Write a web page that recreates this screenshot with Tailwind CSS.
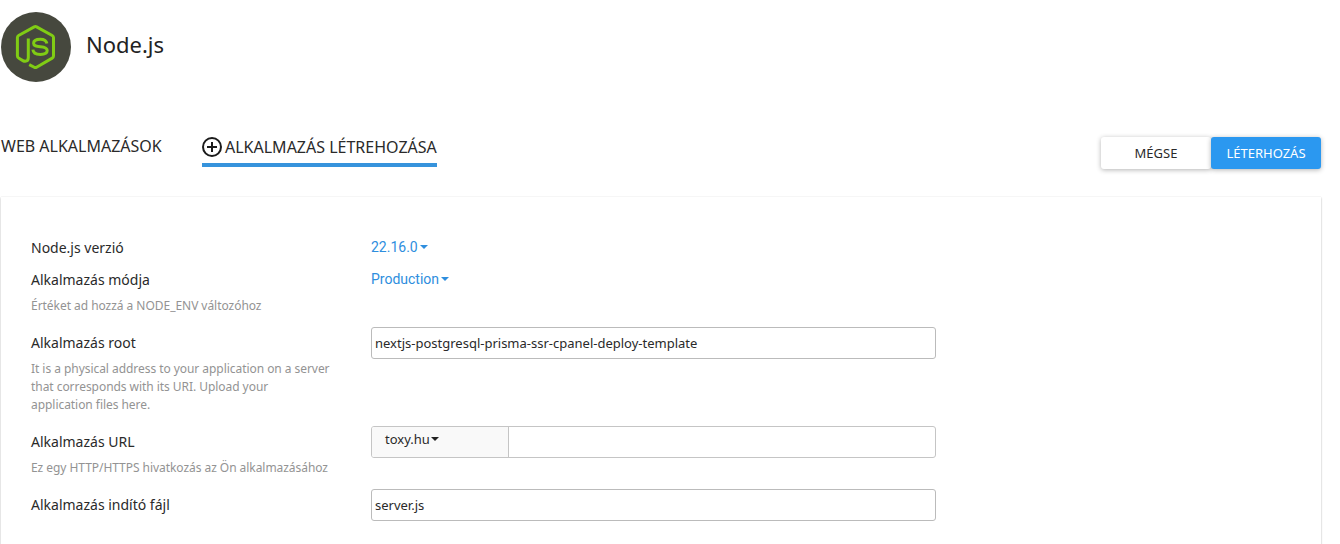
<!DOCTYPE html>
<html lang="hu">
<head>
<meta charset="utf-8">
<title>Node.js</title>
<script src="https://cdn.jsdelivr.net/npm/@tailwindcss/browser@4"></script>
</head>
<body class="h-[544px] overflow-hidden bg-white font-['Noto_Sans',sans-serif] text-[#2a2a2a]">
<header class="flex h-[82px] items-center pt-3 pl-px">
  <svg class="size-[70px] shrink-0" viewBox="1 12 70 70" fill="none" stroke="#80cc14" stroke-width="3">
    <circle cx="36" cy="47" r="35" fill="#46483e" stroke="none"/>
    <path d="M28.300 38.500V57.600Q28.300 61.300 25.200 61.300Q24 61.300 22.800 60.600L18.900 58.300Q17.400 57.400 17.400 56V37.500Q17.400 36.200 18.600 35.500L34.200 26.900Q35.400 26.300 36.600 26.900L52.200 35.500Q53.500 36.200 53.500 37.500V56Q53.500 57.400 52.200 58.100L36.600 67.200Q35.400 67.900 34.200 67.200L29.200 64.600"/>
    <path d="M46.900 43.600C46.400 40.500 44.300 39.200 40.300 39.200C36.300 39.200 33.600 40.500 33.600 43.200C33.600 46 36.200 46.300 40.400 46.700C44.800 47.100 47.200 47.900 47.200 50.600C47.200 53.300 44.600 54.400 40.300 54.400C35.800 54.400 33.200 53 32.900 49.600"/>
  </svg>
  <h1 class="-mt-1.5 ml-[15px] text-[22px] leading-8 text-[#222]">Node.js</h1>
</header>

<nav class="mt-[54px] flex h-[61px] items-start pl-px pr-[19px]">
  <a class="mr-[40px] w-[161px] text-[16px] leading-5 whitespace-nowrap">WEB ALKALMAZÁSOK</a>
  <a class="mt-px flex h-[30px] w-[235px] items-start gap-[3px] border-b-4 border-[#3693dc] text-[16px] leading-5 whitespace-nowrap">
    <svg class="size-5 shrink-0" viewBox="0 0 20 20" fill="none" stroke="#1b1b1b" stroke-width="2"><circle cx="10" cy="10" r="9"/><path d="M10 5v10M5 10h10"/></svg>
    <span>ALKALMAZÁS LÉTREHOZÁSA</span>
  </a>
  <div class="mt-px ml-auto flex text-[13px] leading-8">
    <button class="h-8 w-[110px] rounded-[3px] bg-white shadow-[0_1px_5px_rgba(0,0,0,0.3)]">MÉGSE</button>
    <button class="relative h-8 w-[110px] rounded-[3px] bg-[#2b98f0] text-white shadow-[0_1px_5px_rgba(0,0,0,0.3)]">LÉTERHOZÁS</button>
  </div>
</nav>

<main class="ml-px flex h-[360px] w-[1320px] flex-col gap-[19px] px-[30px] pt-[41px] text-[14px] leading-5 shadow-[0_1px_2px_rgba(0,0,0,0.25),0_0_1px_rgba(0,0,0,0.12)]">
  <section class="-mb-[7px] flex">
    <div class="w-[340px]">Node.js verzió</div>
    <div class="-mt-[3px] flex items-center gap-[2px] font-[Roboto] text-[#2e8ede]">22.16.0<svg class="h-1 w-2" viewBox="0 0 8 4" fill="currentColor"><path d="M0 0h8L4 4z"/></svg></div>
  </section>
  <section class="flex items-start">
    <div class="w-[340px]"><div>Alkalmazás módja</div><p class="mt-[7px] -mb-px text-[12px] leading-[18px] tracking-[-0.04px] text-[#939393]">Értéket ad hozzá a NODE_ENV változóhoz</p></div>
    <div class="-mt-px flex items-center gap-[2px] font-[Roboto] text-[#2e8ede]">Production<svg class="h-1 w-2" viewBox="0 0 8 4" fill="currentColor"><path d="M0 0h8L4 4z"/></svg></div>
  </section>
  <section class="flex items-start">
    <div class="w-[340px]"><div>Alkalmazás root</div><p class="mt-[7px] -mb-px text-[12px] leading-[18px] tracking-[-0.05px] whitespace-nowrap text-[#939393]">It is a physical address to your application on a server<br>that corresponds with its URI. Upload your<br>application files here.</p></div>
    <div class="-mt-1.5 h-8 w-[565px] rounded-[3px] border border-[#bbb] pl-[3px] text-[13px] leading-[31px]">nextjs-postgresql-prisma-ssr-cpanel-deploy-template</div>
  </section>
  <section class="flex items-start">
    <div class="w-[340px]"><div>Alkalmazás URL</div><p class="mt-[7px] -mb-px text-[12px] leading-[18px] tracking-[-0.05px] whitespace-nowrap text-[#939393]">Ez egy HTTP/HTTPS hivatkozás az Ön alkalmazásához</p></div>
    <div class="-mt-1.5 flex h-8 w-[565px] overflow-hidden rounded-[3px] border border-[#c5c5c5]">
      <div class="flex w-[137px] items-center gap-px border-r border-[#c5c5c5] bg-[#f9f9f9] pb-1.5 pl-[13px] text-[13px]">toxy.hu<svg class="h-1 w-2" viewBox="0 0 8 4" fill="#222"><path d="M0 0h8L4 4z"/></svg></div>
    </div>
  </section>
  <section class="flex items-start">
    <div class="w-[340px]">Alkalmazás indító fájl</div>
    <div class="-mt-1.5 h-8 w-[565px] rounded-[3px] border border-[#bbb] pl-[3px] text-[13px] leading-[31px]">server.js</div>
  </section>
</main>
</body>
</html>
